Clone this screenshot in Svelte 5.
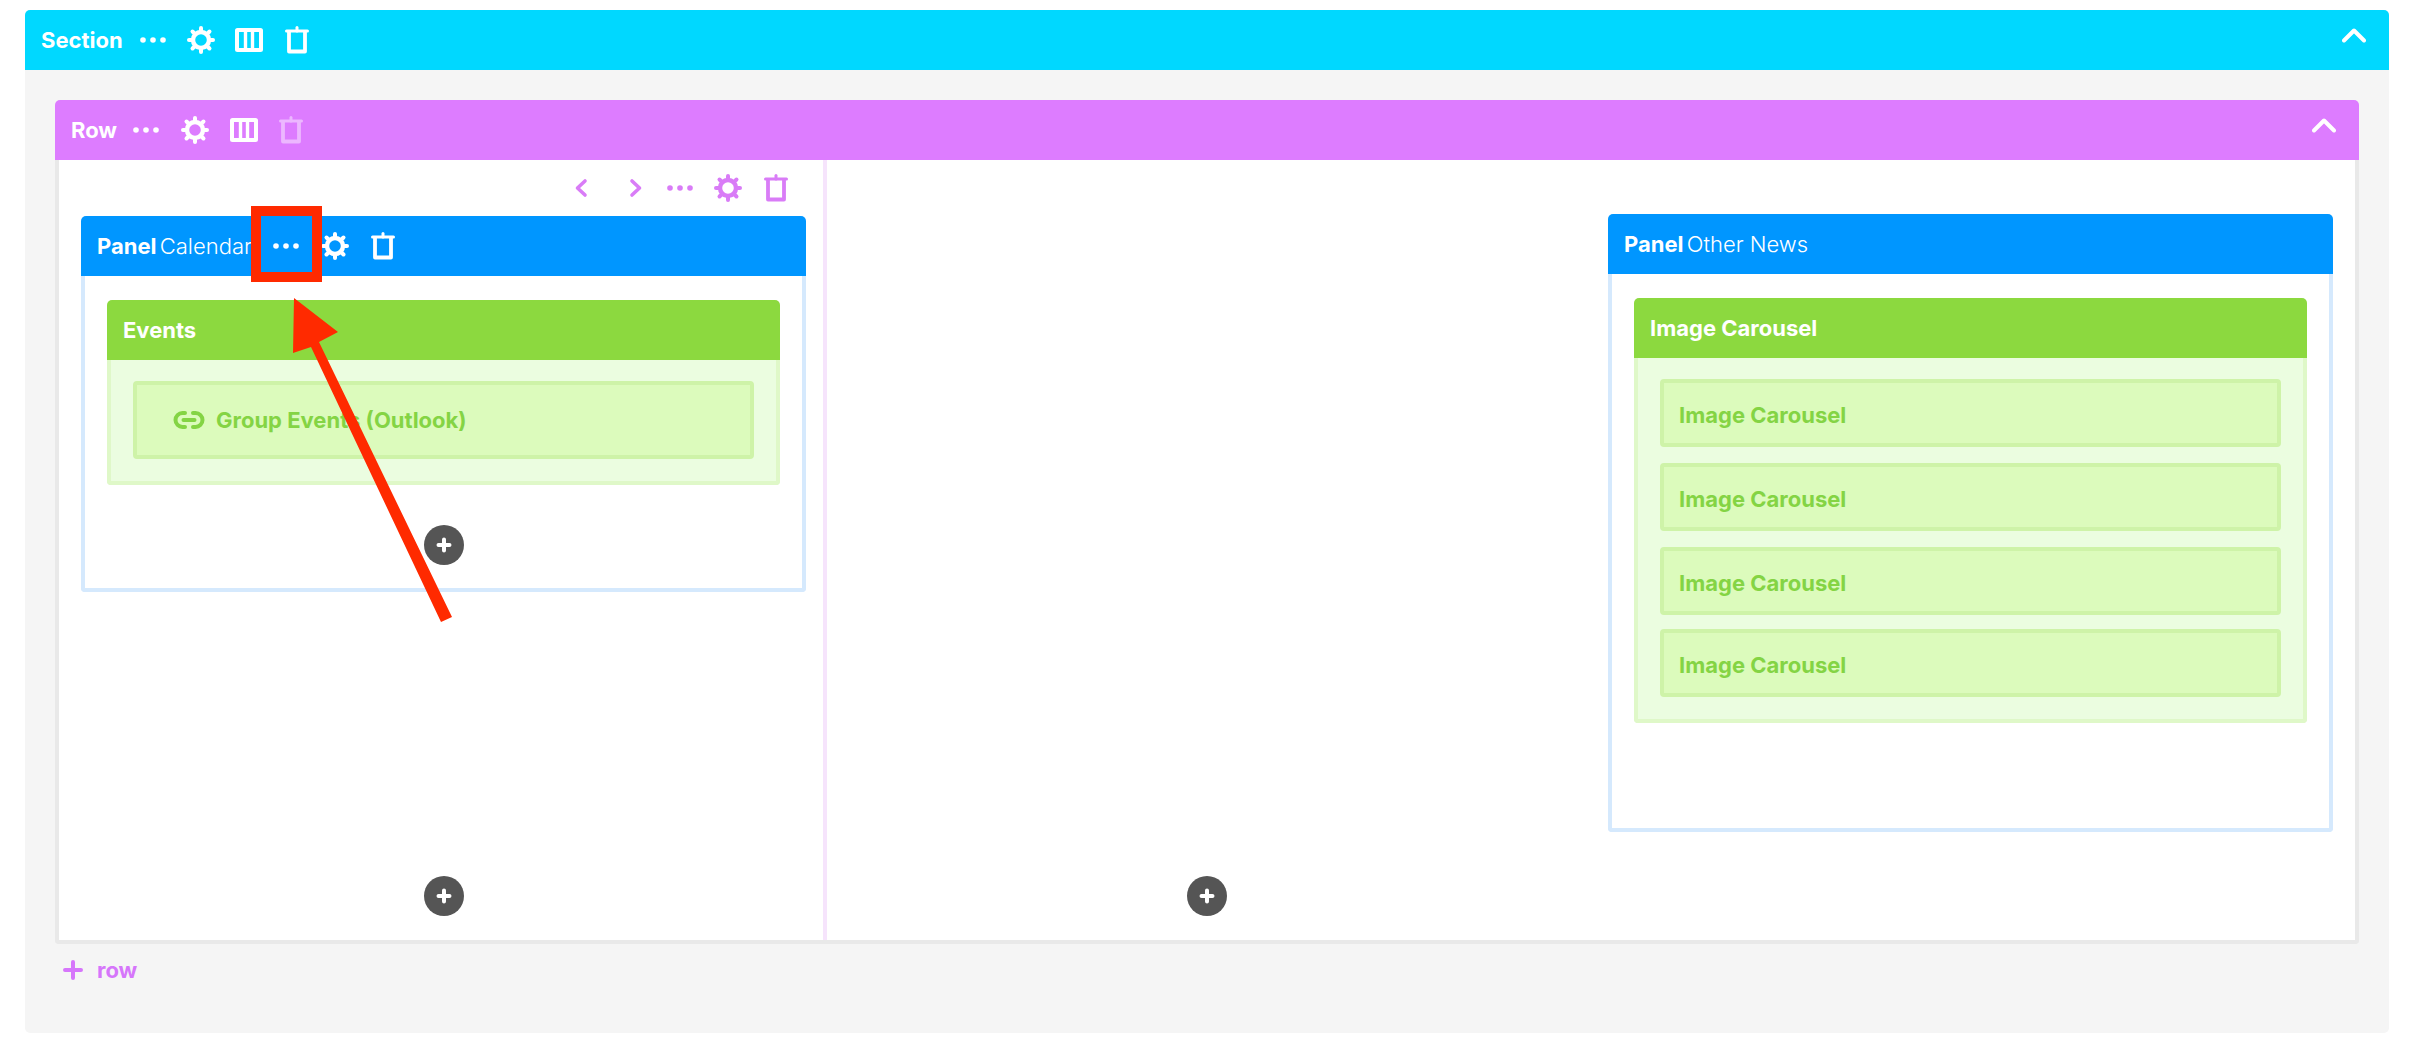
<script>
  const carousels = ['a', 'b', 'c', 'd'];
  const angles = [0, 45, 90, 135, 180, 225, 270, 315];
</script>

{#snippet dots()}
  <svg class="dots" viewBox="0 0 26 6"><circle cx="3" cy="3" r="2.8"/><circle cx="13" cy="3" r="2.8"/><circle cx="23" cy="3" r="2.8"/></svg>
{/snippet}

{#snippet gear()}
  <svg class="gear" viewBox="0 0 28 28">
    <circle cx="14" cy="14" r="8" fill="none" stroke="currentColor" stroke-width="4.4"/>
    {#each angles as a}
      <line x1="14" y1="5" x2="14" y2="2" transform="rotate({a} 14 14)" stroke="currentColor" stroke-width="4" stroke-linecap="round"/>
    {/each}
  </svg>
{/snippet}

{#snippet columns()}
  <svg class="columns" viewBox="0 0 28 24">
    <rect x="2" y="2" width="24" height="20" rx="0.5" fill="none" stroke="currentColor" stroke-width="4"/>
    <line x1="10.500" y1="2" x2="10.500" y2="22" stroke="currentColor" stroke-width="3.4"/>
    <line x1="17.500" y1="2" x2="17.500" y2="22" stroke="currentColor" stroke-width="3.4"/>
  </svg>
{/snippet}

{#snippet trash()}
  <svg class="trash" viewBox="0 0 24 28">
    <path d="M4 5.500V25.500H20V5.500" fill="none" stroke="currentColor" stroke-width="3.8" stroke-linejoin="round"/>
    <line x1="1.500" y1="5" x2="22.500" y2="5" stroke="currentColor" stroke-width="3" stroke-linecap="round"/>
    <line x1="12" y1="1.500" x2="12" y2="5" stroke="currentColor" stroke-width="3" stroke-linecap="round"/>
  </svg>
{/snippet}

{#snippet chevronUp()}
  <svg class="chev-up" viewBox="0 0 24 16"><path d="M2 13.500L12 3.500L22 13.500" fill="none" stroke="currentColor" stroke-width="4" stroke-linecap="round" stroke-linejoin="round"/></svg>
{/snippet}

{#snippet plusBtn(cls)}
  <button class="add {cls}" aria-label="add">
    <svg viewBox="0 0 16 16"><path d="M8 2.500V13.500M2.500 8H13.500" stroke="#fff" stroke-width="4" stroke-linecap="round"/></svg>
  </button>
{/snippet}

<div class="page">
  <section class="section">
    <header class="bar sec-bar">
      <span class="title">Section</span>
      <span class="tools sec-tools">{@render dots()}{@render gear()}{@render columns()}{@render trash()}</span>
      {@render chevronUp()}
    </header>
    <div class="sec-body">
      <div class="row">
        <header class="bar row-bar">
          <span class="title">Row</span>
          <span class="tools row-tools">{@render dots()}{@render gear()}{@render columns()}<span class="faded">{@render trash()}</span></span>
          {@render chevronUp()}
        </header>
        <div class="row-body">
          <div class="col col-left">
            <div class="col-tools">
              <svg class="chev" viewBox="0 0 14 20"><path d="M11 3L3.500 10L11 17" fill="none" stroke="currentColor" stroke-width="3.6" stroke-linecap="round" stroke-linejoin="round"/></svg>
              <svg class="chev next" viewBox="0 0 14 20"><path d="M3 3L10.500 10L3 17" fill="none" stroke="currentColor" stroke-width="3.6" stroke-linecap="round" stroke-linejoin="round"/></svg>
              {@render dots()}{@render gear()}{@render trash()}
            </div>
            <div class="panel panel-left">
              <header class="bar panel-bar">
                <span class="ptitle"><b>Panel</b> Calendar</span>
                <span class="tools panel-tools">{@render dots()}{@render gear()}{@render trash()}</span>
              </header>
              <div class="panel-body">
                <div class="widget">
                  <header class="bar widget-bar"><span class="title">Events</span></header>
                  <div class="widget-body ev-body">
                    <div class="item link-item">
                      <svg class="link" viewBox="0 0 32 20">
                        <path d="M12 3H9.500a7 7 0 0 0 0 14H12M20 3h2.500a7 7 0 0 1 0 14H20M10.500 10H21.500" fill="none" stroke="currentColor" stroke-width="4" stroke-linecap="round"/>
                      </svg>
                      <span>Group Events (Outlook)</span>
                    </div>
                  </div>
                </div>
                {@render plusBtn('add-panel')}
              </div>
            </div>
            {@render plusBtn('add-col')}
          </div>
          <div class="col col-right">
            <div class="panel panel-right">
              <header class="bar panel-bar">
                <span class="ptitle"><b>Panel</b> Other News</span>
              </header>
              <div class="panel-body">
                <div class="widget">
                  <header class="bar widget-bar"><span class="title">Image Carousel</span></header>
                  <div class="widget-body car-body">
                    {#each carousels as c}
                      <div class="item car-item"><span>Image Carousel</span></div>
                    {/each}
                  </div>
                </div>
              </div>
            </div>
            {@render plusBtn('add-col-right')}
          </div>
        </div>
      </div>
      <div class="add-row">
        <svg viewBox="0 0 20 20"><path d="M10 2V18M2 10H18" stroke="currentColor" stroke-width="4" stroke-linecap="round"/></svg>
        <span>row</span>
      </div>
    </div>
  </section>

  <svg class="annot" viewBox="0 0 2420 1048">
    <rect x="256" y="211" width="61" height="66" fill="none" stroke="#ff2a00" stroke-width="10"/>
    <path d="M294 298L338 332L319 342L452 617L441 622L311 347L293 353Z" fill="#ff2a00"/>
  </svg>
</div>

<style>
  :global(body) { margin: 0; background: #fff; }
  .page {
    position: relative;
    width: 2420px;
    height: 1048px;
    overflow: hidden;
    padding: 10px 31px 0 25px;
    box-sizing: border-box;
    font-family: Inter, "Liberation Sans", sans-serif;
  }
  .section {
    height: 1023px;
    background: #f5f5f5;
    border-radius: 5px;
    display: flex;
    flex-direction: column;
  }
  .bar {
    display: flex;
    align-items: center;
    color: #fff;
    height: 60px;
    flex: none;
    border-radius: 5px 5px 0 0;
    box-sizing: border-box;
  }
  .title { font-weight: 700; font-size: 22px; line-height: 1; }
  .tools { display: flex; align-items: center; }
  .dots { width: 26px; height: 6px; fill: currentColor; flex: none; }
  .gear { width: 28px; height: 28px; flex: none; }
  .columns { width: 28px; height: 24px; flex: none; }
  .trash { width: 24px; height: 28px; flex: none; display: block; }
  .chev-up { width: 24px; height: 16px; margin-left: auto; margin-top: -10px; }
  .faded { opacity: 0.45; display: flex; }

  .sec-bar { background: #00d8ff; padding: 0 23px 0 16px; }
  .sec-tools { margin-left: 17px; }
  .sec-tools .gear { margin-left: 21px; }
  .sec-tools .columns { margin-left: 20px; }
  .sec-tools .trash { margin-left: 22px; }

  .sec-body { padding: 30px 30px 0; display: flex; flex-direction: column; }
  .row { display: flex; flex-direction: column; }
  .row-bar { background: #dd7cff; padding: 0 23px 0 16px; }
  .row-tools { margin-left: 16px; }
  .row-tools .gear { margin-left: 22px; }
  .row-tools .columns { margin-left: 21px; }
  .row-tools .faded { margin-left: 21px; }

  .row-body {
    height: 784px;
    box-sizing: border-box;
    display: flex;
    background: #fff;
    border: 4px solid #e9e9e9;
    border-top: 0;
    border-radius: 0 0 4px 4px;
  }
  .col { position: relative; flex: none; box-sizing: border-box; }
  .col-left { width: 768px; border-right: 4px solid #f6e4fc; }
  .col-right { flex: 1; display: flex; justify-content: flex-end; padding-top: 54px; padding-right: 22px; }

  .col-tools {
    height: 56px;
    display: flex;
    align-items: center;
    justify-content: flex-end;
    color: #d97cf7;
    padding-right: 35px;
    box-sizing: border-box;
  }
  .chev { width: 14px; height: 20px; flex: none; }
  .col-tools .next { margin-left: 41px; }
  .col-tools .dots { margin-left: 24px; }
  .col-tools .gear { margin-left: 21px; }
  .col-tools .trash { margin-left: 22px; }

  .panel { width: 725px; height: 376px; display: flex; flex-direction: column; flex: none; }
  .panel-left { margin-left: 22px; }
  .panel-right { height: 618px; }
  .panel-bar { background: #0096ff; padding: 0 16px; }
  .ptitle { font-size: 22px; font-weight: 300; line-height: 1; white-space: pre; }
  .ptitle b { font-weight: 700; margin-right: -3px; }
  .panel-tools { margin-left: 21px; }
  .panel-tools .gear { margin-left: 22px; }
  .panel-tools .trash { margin-left: 22px; }

  .panel-body {
    position: relative;
    flex: 1;
    background: #fff;
    border: 4px solid #d5e9fd;
    border-top: 0;
    border-radius: 0 0 4px 4px;
    padding: 24px 22px 0;
  }

  .widget-bar { background: #8cd93f; padding: 0 16px; }
  .widget-body {
    background: #ebfde0;
    border: 4px solid #dff8c8;
    border-top: 0;
    border-radius: 0 0 4px 4px;
    padding: 21px 22px 22px;
    display: flex;
    flex-direction: column;
  }
  .car-body { gap: 16px; padding-bottom: 22px; }
  .item {
    background: #dcfbbc;
    border: 4px solid #cef3a8;
    border-radius: 4px;
    color: #84d444;
    font-weight: 700;
    font-size: 22px;
    display: flex;
    align-items: center;
    box-sizing: border-box;
  }
  .link-item { height: 78px; padding-left: 36px; }
  .link { width: 32px; height: 20px; margin-right: 11px; flex: none; }
  .car-item { height: 68px; padding: 4px 0 0 15px; }
  .car-item:last-child { margin-top: -2px; }

  .add {
    position: absolute;
    width: 40px;
    height: 40px;
    padding: 12px;
    border: 0;
    border-radius: 50%;
    background: #555;
    display: flex;
  }
  .add svg { width: 16px; height: 16px; }
  .add-panel { left: 339px; top: 249px; }
  .add-col { left: 365px; top: 716px; }
  .add-col-right { left: 360px; top: 716px; }

  .add-row {
    display: flex;
    align-items: center;
    height: 52px;
    padding-left: 8px;
    color: #d676fb;
    font-size: 22px;
    font-weight: 700;
  }
  .add-row svg { width: 20px; height: 20px; margin-right: 14px; }

  .annot { position: absolute; left: 0; top: 0; width: 2420px; height: 1048px; pointer-events: none; }
</style>
